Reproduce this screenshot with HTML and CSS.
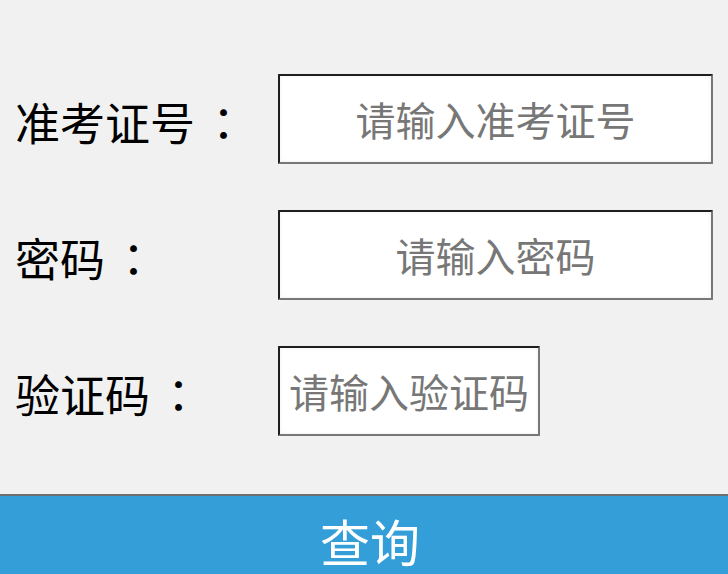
FILE: index.html
```html
<!DOCTYPE html>
<html lang="zh-CN">
<head>
<meta charset="utf-8">
<title>查询</title>
<link rel="stylesheet" href="styles.css">
</head>
<body>
<form class="query-form">
  <div class="fields">
    <div class="row">
      <label class="label" for="ticket">准考证号<span class="colon" lang="zh-TW">：</span></label>
      <input class="field field-wide" id="ticket" type="text" placeholder="请输入准考证号">
    </div>
    <div class="row">
      <label class="label" for="pwd">密码<span class="colon" lang="zh-TW">：</span></label>
      <input class="field field-wide" id="pwd" type="password" placeholder="请输入密码">
    </div>
    <div class="row">
      <label class="label" for="code">验证码<span class="colon" lang="zh-TW">：</span></label>
      <input class="field field-short" id="code" type="text" placeholder="请输入验证码">
    </div>
  </div>
  <button class="submit" type="button">查询</button>
</form>
</body>
</html>
```
FILE: styles.css
```css
html, body {
  margin: 0;
  padding: 0;
  background: #f1f1f1;
  overflow: hidden;
  height: 574px;
}
body {
  font-family: "Microsoft YaHei", "Noto Sans CJK SC", "Noto Sans", sans-serif;
}
.query-form {
  display: flex;
  flex-direction: column;
}
.fields {
  display: flex;
  flex-direction: column;
  gap: 46px;
  padding-top: 74px;
}
.row {
  display: flex;
  align-items: center;
  height: 90px;
}
.label {
  width: 263px;
  padding-left: 15px;
  font-size: 45px;
  color: #000;
  line-height: 1;
  padding-top: 4px;
}
.colon {
  font-family: "Noto Sans CJK TC", "Noto Sans CJK SC", sans-serif;
  margin-left: 6px;
}
.field {
  box-sizing: border-box;
  height: 90px;
  margin: 0;
  padding: 0 8px;
  border-style: solid;
  border-width: 2px;
  border-color: #1e1e1e #777 #777 #1e1e1e;
  border-radius: 1px;
  background: #fff;
  box-shadow: inset 0 0 4px rgba(0, 0, 0, 0.06);
  font-family: "Microsoft YaHei", "Noto Sans CJK SC", "Noto Sans", sans-serif;
  font-size: 40px;
  text-align: center;
  color: #333;
  outline: none;
}
.field::placeholder {
  color: #777;
}
.field-wide {
  width: 435px;
}
.field-short {
  width: 262px;
}
.submit {
  box-sizing: border-box;
  margin-top: 58px;
  width: 100%;
  height: 80px;
  border: 0;
  border-top: 2px solid #6f6f6f;
  background: #339ed7;
  color: #fff;
  font-family: "Microsoft YaHei", "Noto Sans CJK SC", "Noto Sans", sans-serif;
  font-size: 50px;
  line-height: 1;
  padding: 10px 0 0 12px;
}
```
